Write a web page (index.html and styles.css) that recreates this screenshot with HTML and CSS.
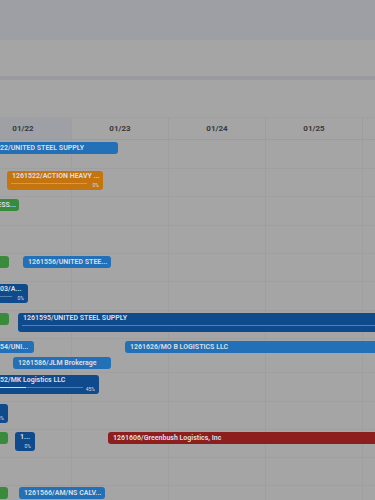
FILE: index.html
```html
<!DOCTYPE html>
<html lang="en">
<head>
    <meta charset="UTF-8">
    <meta name="viewport" content="width=device-width, initial-scale=1.0">
    <title>Load Board</title>
    <link rel="stylesheet" href="styles.css">
</head>
<body>
    <div class="topbar"></div>
    <div class="toolbar"></div>
    <div class="divider"></div>
    <div class="filters"></div>

    <div class="gantt">
        <div class="scale">
            <div class="day today">01/22</div>
            <div class="day">01/23</div>
            <div class="day">01/24</div>
            <div class="day">01/25</div>
            <div class="day"></div>
        </div>

        <div class="row h29">
            <div class="bar blue" style="left:-25px;width:143px">1261522/UNITED STEEL SUPPLY</div>
        </div>
        <div class="row">
            <div class="bar orange tall" style="left:7px;width:96px">
                1261522/ACTION HEAVY ...
                <span class="track"><span class="fill" style="width:0%"></span></span>
                <span class="pct">0%</span>
            </div>
        </div>
        <div class="row h29">
            <div class="bar green" style="left:-79px;width:98px">1261533/ATLAS EXPRESS...</div>
        </div>
        <div class="row"></div>
        <div class="row">
            <div class="bar green" style="left:-80px;width:89px"></div>
            <div class="bar blue" style="left:23px;width:88px">1261556/UNITED STEE...</div>
        </div>
        <div class="row h29">
            <div class="bar navy tall" style="left:-25px;width:53px">
                1261503/A...
                <span class="track"><span class="fill" style="width:0%"></span></span>
                <span class="pct">0%</span>
            </div>
        </div>
        <div class="row">
            <div class="bar green" style="left:-80px;width:89px"></div>
            <div class="bar navy tall" style="left:18px;width:400px">
                1261595/UNITED STEEL SUPPLY
                <span class="track"><span class="fill" style="width:0%"></span></span>
            </div>
        </div>
        <div class="row h34">
            <div class="bar blue" style="left:-25px;width:59px">1261554/UNI...</div>
            <div class="bar blue" style="left:125px;width:300px">1261626/MO B LOGISTICS LLC</div>
            <div class="bar blue lane2" style="left:13px;width:98px">1261586/JLM Brokerage</div>
        </div>
        <div class="row h29">
            <div class="bar navy tall" style="left:-25px;width:124px">
                1261552/MK Logistics LLC
                <span class="track"><span class="fill" style="width:45%"></span></span>
                <span class="pct">45%</span>
            </div>
        </div>
        <div class="row">
            <div class="bar navy tall" style="left:-60px;width:68px">
                1261571/U...
                <span class="track"><span class="fill" style="width:0%"></span></span>
                <span class="pct">0%</span>
            </div>
        </div>
        <div class="row">
            <div class="bar green" style="left:-80px;width:88px"></div>
            <div class="bar navy tall" style="left:15px;width:20px">
                1...
                <span class="pct">0%</span>
            </div>
            <div class="bar red" style="left:108px;width:300px">1261606/Greenbush Logistics, Inc</div>
        </div>
        <div class="row"></div>
        <div class="row">
            <div class="bar green first" style="left:-80px;width:88px"></div>
            <div class="bar blue first" style="left:19px;width:86px">1261566/AM/NS CALV...</div>
        </div>
    </div>
</body>
</html>
```

FILE: styles.css
```css
body {
    margin: 0;
    width: 375px;
    height: 500px;
    overflow: hidden;
    background-color: #a5a5a5;
    font-family: Roboto, "Liberation Sans", sans-serif;
}
.topbar {
    height: 40px;
    background-color: #9e9fa4;
}
.toolbar {
    height: 36px;
}
.divider {
    height: 4px;
    background-color: #9a9aa1;
}
.filters {
    height: 37px;
    border-bottom: 1px solid #93aa8b;
}
.gantt {
    overflow: hidden;
}
.scale {
    display: flex;
    height: 21px;
    margin-left: -25px;
    border-bottom: 1px solid #9c9c9c;
}
.day {
    flex: 0 0 97px;
    box-sizing: border-box;
    border-right: 1px solid #9e9e9e;
    display: flex;
    align-items: center;
    justify-content: center;
    font-size: 8px;
    font-weight: 700;
    color: #393939;
}
.day.today {
    background-color: #9fa0a6;
}
.row {
    position: relative;
    height: 28px;
    box-sizing: border-box;
    border-bottom: 1px solid #9f9f9f;
    background-image: linear-gradient(to right, transparent 96px, #9f9f9f 96px);
    background-size: 97px 100%;
    background-position: -25px 0;
}
.row.h29 {
    height: 29px;
}
.row.h34 {
    height: 34px;
}
.bar {
    position: absolute;
    top: 2px;
    height: 12px;
    box-sizing: border-box;
    padding: 0 5px;
    border-radius: 3px;
    color: #d8dce2;
    font-size: 7px;
    font-weight: 700;
    line-height: 12px;
    white-space: nowrap;
    overflow: hidden;
}
.bar.first {
    top: 1px;
}
.bar.lane2 {
    top: 18px;
}
.bar.tall {
    height: 19px;
    line-height: 11px;
}
.bar.blue {
    background-color: #2170b8;
}
.bar.navy {
    background-color: #0f4a8d;
}
.bar.orange {
    background-color: #c4750f;
}
.bar.green {
    background-color: #3a8a3c;
}
.bar.red {
    background-color: #8c1e1e;
}
.track {
    position: absolute;
    left: 4px;
    right: 16px;
    top: 12px;
    height: 1px;
    background-color: rgba(220, 225, 235, 0.35);
}
.fill {
    display: block;
    height: 1px;
    background-color: #d8dce2;
}
.pct {
    position: absolute;
    right: 4px;
    top: 11px;
    font-size: 5px;
    font-weight: 400;
    line-height: 7px;
}
```
